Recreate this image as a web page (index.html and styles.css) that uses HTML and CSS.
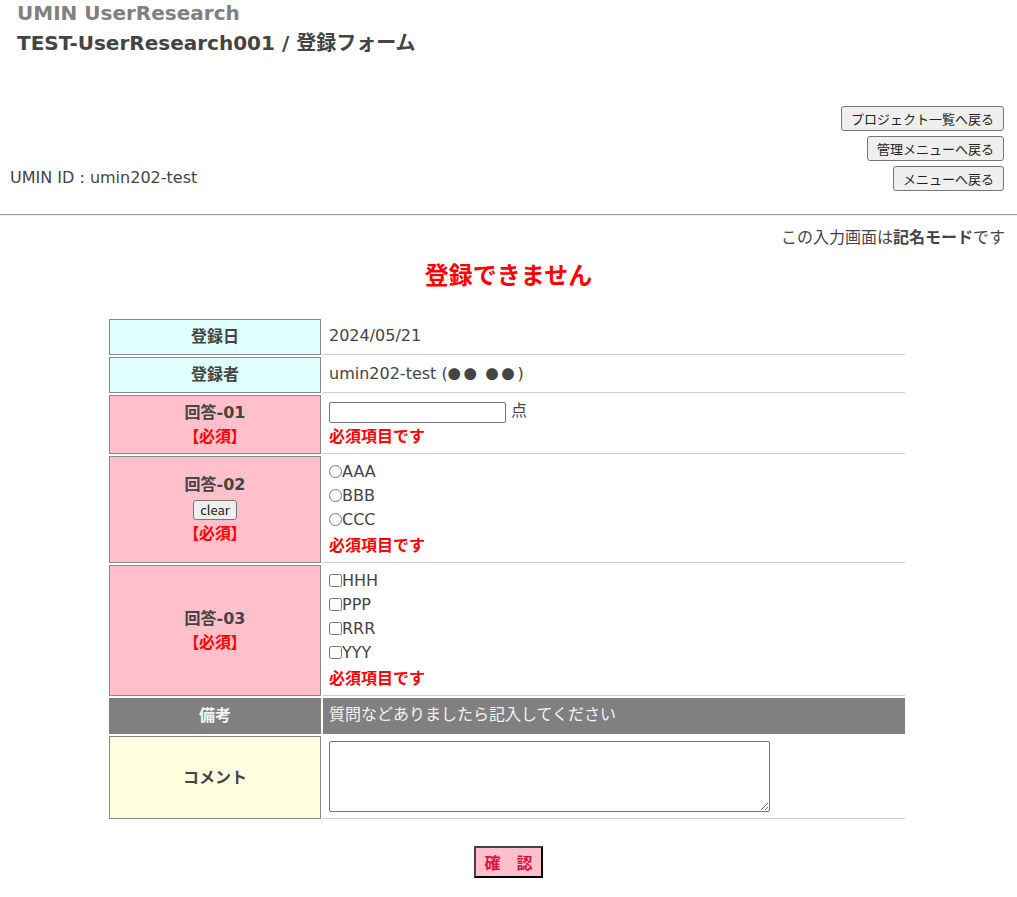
FILE: index.html
```html
<!DOCTYPE html>
<html lang="ja">
<head>
    <meta charset="UTF-8">
    <title>TEST-UserResearch001 / 登録フォーム</title>
    <link rel="stylesheet" href="styles.css">
</head>
<body>
    <header>
        <div class="site-name">UMIN UserResearch</div>
        <h1>TEST-UserResearch001 / 登録フォーム</h1>
    </header>

    <div class="user-bar">
        <div class="user-id">UMIN ID : umin202-test</div>
        <div class="menu-buttons">
            <button type="button">プロジェクト一覧へ戻る</button>
            <button type="button">管理メニューへ戻る</button>
            <button type="button">メニューへ戻る</button>
        </div>
    </div>

    <hr class="divider">

    <div class="mode-note">この入力画面は<b>記名モード</b>です</div>
    <div class="error-title">登録できません</div>

    <form class="entry-form">
        <table class="form-table">
            <tr>
                <th class="info">登録日</th>
                <td class="single">2024/05/21</td>
            </tr>
            <tr>
                <th class="info">登録者</th>
                <td class="single">umin202-test (<span class="dots">●● ●●</span>)</td>
            </tr>
            <tr>
                <th class="required">回答-01<br><span class="must">【必須】</span></th>
                <td>
                    <div class="line"><input type="text" class="score"> 点</div>
                    <div class="line err">必須項目です</div>
                </td>
            </tr>
            <tr>
                <th class="required">
                    回答-02<br>
                    <button type="button" class="clear-btn">clear</button><br>
                    <span class="must">【必須】</span>
                </th>
                <td>
                    <label class="line"><input type="radio" name="q2">AAA</label>
                    <label class="line"><input type="radio" name="q2">BBB</label>
                    <label class="line"><input type="radio" name="q2">CCC</label>
                    <div class="line err">必須項目です</div>
                </td>
            </tr>
            <tr>
                <th class="required">回答-03<br><span class="must">【必須】</span></th>
                <td>
                    <label class="line"><input type="checkbox">HHH</label>
                    <label class="line"><input type="checkbox">PPP</label>
                    <label class="line"><input type="checkbox">RRR</label>
                    <label class="line"><input type="checkbox">YYY</label>
                    <div class="line err">必須項目です</div>
                </td>
            </tr>
            <tr class="section">
                <th>備考</th>
                <td class="single">質問などありましたら記入してください</td>
            </tr>
            <tr>
                <th class="comment">コメント</th>
                <td><textarea class="comment-box"></textarea></td>
            </tr>
        </table>

        <div class="submit-row">
            <button type="button" class="confirm-btn">確　認</button>
        </div>
    </form>
</body>
</html>
```

FILE: styles.css
```css
* {
    box-sizing: border-box;
}
body {
    margin: 0;
    font-family: "DejaVu Sans", "Noto Sans CJK JP", sans-serif;
    font-size: 16px;
    color: #444;
    background: #fff;
}
header {
    padding: 0 17px;
}
.site-name {
    font-size: 20px;
    font-weight: bold;
    color: #808080;
    line-height: 26px;
}
h1 {
    margin: 2px 0 0;
    font-size: 20px;
    line-height: 30px;
    color: #444;
}
.user-bar {
    display: flex;
    justify-content: space-between;
    align-items: flex-end;
    padding: 0 13px 0 10px;
    margin-top: 48px;
}
.user-id {
    line-height: 24px;
    padding-bottom: 1px;
}
.menu-buttons {
    display: flex;
    flex-direction: column;
    align-items: flex-end;
    gap: 5px;
}
button {
    font-family: "Noto Sans CJK JP", sans-serif;
    font-size: 13px;
    color: #222;
    background: #efefef;
    border: 1px solid #767676;
    border-radius: 3px;
    padding: 1px 9px;
    height: 25px;
    line-height: 21px;
}
.divider {
    margin: 23px 0 0;
    border: none;
    border-top: 1px solid #9a9a9a;
    border-bottom: 1px solid #eee;
}
.mode-note {
    text-align: right;
    padding-right: 12px;
    margin-top: 10px;
    line-height: 24px;
}
.error-title {
    text-align: center;
    color: #ff0000;
    font-size: 24px;
    font-weight: bold;
    line-height: 32px;
    margin-top: 10px;
}
.form-table {
    width: 800px;
    margin: 25px 0 0 107px;
    border-spacing: 2px;
}
.form-table th {
    width: 212px;
    border: 1px solid #888;
    font-size: 16px;
    line-height: 24px;
    text-align: center;
    vertical-align: middle;
    padding: 4px 4px;
}
.form-table td {
    border-bottom: 1px solid #ccc;
    padding: 4px 6px 6px;
    line-height: 24px;
    vertical-align: middle;
}
.form-table td.single {
    padding-top: 5px;
}
th.info {
    background: #e0ffff;
}
th.required {
    background: #ffc0cb;
}
th.comment {
    background: #ffffe0;
}
.must {
    color: #ff0000;
    font-feature-settings: "palt";
}
.dots {
    font-family: "Noto Sans CJK JP", sans-serif;
    font-size: 13px;
    letter-spacing: 3px;
}
.line {
    display: block;
    height: 24px;
}
.err {
    color: #ff0000;
    font-weight: bold;
    font-family: "Noto Sans CJK JP", sans-serif;
}
.score {
    width: 177px;
    height: 21px;
    margin: 3px 0 0;
    border: 1px solid #767676;
    border-radius: 2px;
    vertical-align: top;
}
.line input[type="radio"],
.line input[type="checkbox"] {
    width: 13px;
    height: 13px;
    margin: 0;
    vertical-align: -1px;
}
.clear-btn {
    height: 20px;
    line-height: 16px;
    padding: 0 6px;
    margin: 2px 0;
    vertical-align: middle;
}
.section th,
.section td {
    background: #808080;
    color: #f4f4f4;
    border-color: #808080;
}
.section th {
    border: 1px solid #808080;
}
.comment-box {
    display: block;
    width: 441px;
    height: 71px;
    margin: 1px 0 0;
    border: 1px solid #767676;
    border-radius: 2px;
}
.submit-row {
    text-align: center;
    margin-top: 25px;
}
.confirm-btn {
    width: 69px;
    height: 32px;
    background: #ffc0cb;
    color: #dc143c;
    font-size: 16px;
    font-weight: bold;
    border: 2px outset #444;
    border-radius: 0;
    padding: 0;
}
```
